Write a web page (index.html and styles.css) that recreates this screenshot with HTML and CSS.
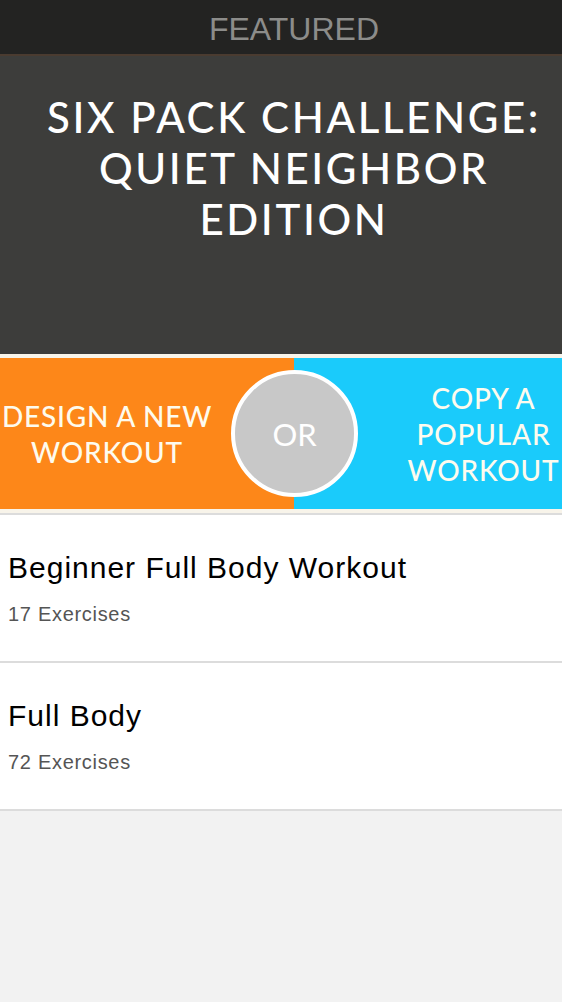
FILE: index.html
```html
<!DOCTYPE html>
<html>
<head>
<meta charset="utf-8">
<link rel="stylesheet" href="styles.css">
</head>
<body>
<div class="app">
  <header class="topbar"><span class="topbar-title">FEATURED</span></header>
  <section class="hero">
    <h1 class="hero-title">SIX PACK CHALLENGE:<br>QUIET NEIGHBOR<br>EDITION</h1>
  </section>
  <div class="band-sep"></div>
  <section class="band">
    <div class="half half-left"><span class="half-text">DESIGN A NEW<br>WORKOUT</span></div>
    <div class="half half-right"><span class="half-text">COPY A<br>POPULAR<br>WORKOUT</span></div>
    <div class="or-badge">OR</div>
  </section>
  <div class="band-sep band-sep-bottom"></div>
  <ul class="list">
    <li class="item">
      <div class="item-title">Beginner Full Body Workout</div>
      <div class="item-sub">17 Exercises</div>
    </li>
    <li class="item">
      <div class="item-title">Full Body</div>
      <div class="item-sub">72 Exercises</div>
    </li>
  </ul>
</div>
</body>
</html>
```
FILE: styles.css
```css
html, body {
  margin: 0;
  padding: 0;
  background: #f2f2f2;
}
.app {
  width: 562px;
  min-height: 1002px;
  background: #f2f2f2;
  font-family: "Liberation Sans", Arial, sans-serif;
}
.topbar {
  height: 56px;
  background: #232322;
  border-bottom: 2px solid #4a3b30;
  box-sizing: border-box;
  display: flex;
  align-items: center;
  justify-content: center;
  padding-left: 26px;
}
.topbar-title {
  color: #8c8c8a;
  font-size: 32px;
  line-height: 1;
  margin-top: 4px;
}
.hero {
  height: 298px;
  background: #3d3d3b;
  box-sizing: border-box;
  padding: 36px 0 0 26px;
  text-align: center;
}
.hero-title {
  margin: 0;
  color: #ffffff;
  font-family: "Lato", sans-serif;
  font-weight: 500;
  font-size: 42px;
  line-height: 51px;
  letter-spacing: 2.6px;
}
.band-sep {
  height: 4px;
  background: #f8f4ea;
}
.band-sep-bottom {
  height: 4px;
  border-bottom: 2px solid #dcdcdc;
}
.band {
  position: relative;
  height: 151px;
  display: flex;
}
.half {
  display: flex;
  align-items: center;
  justify-content: center;
  color: #fdfbee;
  font-family: "Lato", sans-serif;
  font-weight: 500;
  font-size: 28px;
  line-height: 36px;
  letter-spacing: 0.8px;
  text-align: center;
  box-sizing: border-box;
}
.half-left {
  width: 294px;
  background: #fd8719;
  padding-right: 80px;
}
.half-right {
  flex: 1;
  background: #1acbfb;
  padding-left: 111px;
}
.or-badge {
  position: absolute;
  left: 231px;
  top: 12px;
  width: 127px;
  height: 127px;
  box-sizing: border-box;
  border-radius: 50%;
  border: 4px solid #ffffff;
  background: #c8c8c8;
  color: #ffffff;
  font-family: "Lato", sans-serif;
  font-size: 31px;
  display: flex;
  align-items: center;
  justify-content: center;
}
.list {
  list-style: none;
  margin: 0;
  padding: 0;
  background: #ffffff;
}
.item {
  height: 148px;
  box-sizing: border-box;
  border-bottom: 2px solid #dcdcdc;
  padding: 36px 0 0 8px;
}
.item-title {
  color: #000000;
  font-size: 30px;
  letter-spacing: 1px;
  line-height: 34px;
}
.item-sub {
  color: #555555;
  font-size: 20px;
  letter-spacing: 0.7px;
  line-height: 24px;
  margin-top: 17px;
}
```
